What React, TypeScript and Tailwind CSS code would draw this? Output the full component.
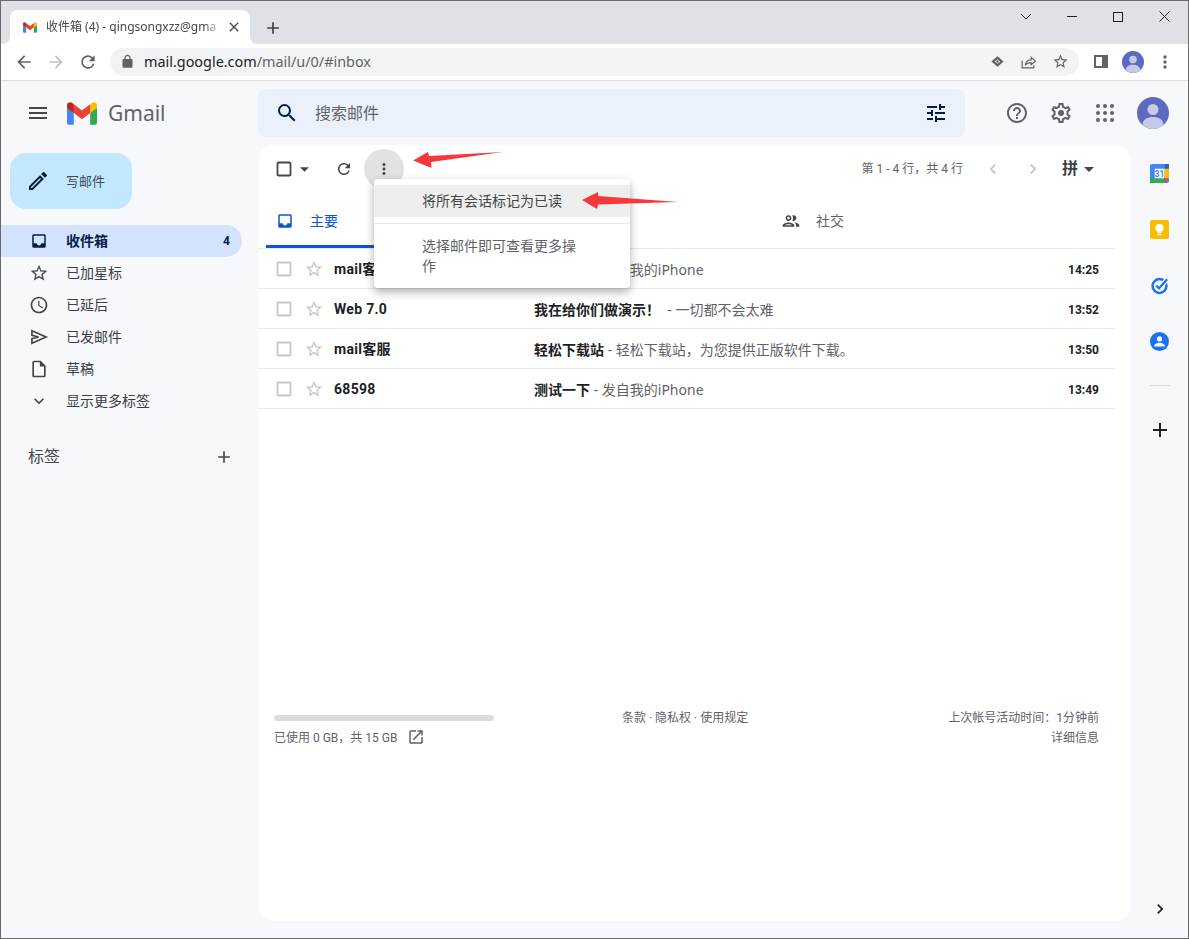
import React from "react";

const P = {
  menu: "M3 18h18v-2H3v2zm0-5h18v-2H3v2zm0-7v2h18V6H3z",
  search: "M15.5 14h-.79l-.28-.27A6.471 6.471 0 0 0 16 9.5 6.5 6.5 0 1 0 9.5 16c1.61 0 3.09-.59 4.23-1.57l.27.28v.79l5 4.99L20.49 19l-4.99-5zm-6 0C7.01 14 5 11.99 5 9.5S7.01 5 9.5 5 14 7.01 14 9.5 11.99 14 9.5 14z",
  tune: "M3 17v2h6v-2H3zM3 5v2h10V5H3zm10 16v-2h8v-2h-8v-2h-2v6h2zM7 9v2H3v2h4v2h2V9H7zm14 4v-2H11v2h10zm-6-4h2V7h4V5h-4V3h-2v6z",
  help: "M11 18h2v-2h-2v2zm1-16C6.48 2 2 6.48 2 12s4.48 10 10 10 10-4.48 10-10S17.52 2 12 2zm0 18c-4.41 0-8-3.59-8-8s3.59-8 8-8 8 3.59 8 8-3.59 8-8 8zm0-14c-2.21 0-4 1.79-4 4h2c0-1.1.9-2 2-2s2 .9 2 2c0 2-3 1.75-3 5h2c0-2.25 3-2.5 3-5 0-2.21-1.79-4-4-4z",
  gear: "M19.43 12.98c.04-.32.07-.64.07-.98 0-.34-.03-.66-.07-.98l2.11-1.65c.19-.15.24-.42.12-.64l-2-3.46a.5.5 0 0 0-.61-.22l-2.49 1c-.52-.4-1.08-.73-1.69-.98l-.38-2.65A.488.488 0 0 0 14 2h-4c-.25 0-.46.18-.49.42l-.38 2.65c-.61.25-1.17.59-1.69.98l-2.49-1a.566.566 0 0 0-.18-.03c-.17 0-.34.09-.43.25l-2 3.46c-.13.22-.07.49.12.64l2.11 1.65c-.04.32-.07.65-.07.98 0 .33.03.66.07.98l-2.11 1.65c-.19.15-.24.42-.12.64l2 3.46a.5.5 0 0 0 .61.22l2.49-1c.52.4 1.08.73 1.69.98l.38 2.65c.03.24.24.42.49.42h4c.25 0 .46-.18.49-.42l.38-2.65c.61-.25 1.17-.59 1.69-.98l2.49 1c.06.02.12.03.18.03.17 0 .34-.09.43-.25l2-3.46c.12-.22.07-.49-.12-.64l-2.11-1.65zm-1.98-1.71c.04.31.05.52.05.73 0 .21-.02.43-.05.73l-.14 1.13.89.7 1.08.84-.7 1.21-1.27-.51-1.04-.42-.9.68c-.43.32-.84.56-1.25.73l-1.06.43-.16 1.13-.2 1.35h-1.4l-.19-1.35-.16-1.13-1.06-.43c-.43-.18-.83-.41-1.23-.71l-.91-.7-1.06.43-1.27.51-.7-1.21 1.08-.84.89-.7-.14-1.13c-.03-.31-.05-.54-.05-.74s.02-.43.05-.73l.14-1.13-.89-.7-1.08-.84.7-1.21 1.27.51 1.04.42.9-.68c.43-.32.84-.56 1.25-.73l1.06-.43.16-1.13.2-1.35h1.39l.19 1.35.16 1.13 1.06.43c.43.18.83.41 1.23.71l.91.7 1.06-.43 1.27-.51.7 1.21-1.07.85-.89.7.14 1.13zM12 9a3 3 0 1 0 0 6 3 3 0 0 0 0-6z",
  pencil: "M3 17.25V21h3.75L17.81 9.94l-3.75-3.75L3 17.25zM5.92 19H5v-.92l9.06-9.06.92.92L5.92 19zM20.71 7.04a1 1 0 0 0 0-1.41l-2.34-2.34a1 1 0 0 0-1.41 0l-1.83 1.83 3.75 3.75 1.83-1.83z",
  inbox: "M19 3H5c-1.1 0-2 .9-2 2v14c0 1.1.9 2 2 2h14c1.1 0 2-.9 2-2V5c0-1.1-.9-2-2-2zm0 12h-4c0 1.66-1.34 3-3 3s-3-1.34-3-3H5V5h14v10z",
  star: "M22 9.24l-7.19-.62L12 2 9.19 8.63 2 9.24l5.46 4.73L5.82 21 12 17.27 18.18 21l-1.63-7.03L22 9.24zM12 15.4l-3.76 2.27 1-4.28-3.32-2.88 4.38-.38L12 6.1l1.71 4.04 4.38.38-3.32 2.88 1 4.28L12 15.4z",
  clock: "M11.99 2C6.47 2 2 6.48 2 12s4.47 10 9.99 10C17.52 22 22 17.52 22 12S17.52 2 11.99 2zM12 20c-4.42 0-8-3.58-8-8s3.58-8 8-8 8 3.58 8 8-3.58 8-8 8zm.5-13H11v6l5.25 3.15.75-1.23-4.5-2.67z",
  draft: "M14 2H6c-1.1 0-1.99.9-1.99 2L4 20c0 1.1.89 2 1.99 2H18c1.1 0 2-.9 2-2V8l-6-6zM6 20V4h7v5h5v11H6z",
  chevDown: "M16.59 8.59L12 13.17 7.41 8.59 6 10l6 6 6-6z",
  chevLeft: "M15.41 7.41L14 6l-6 6 6 6 1.41-1.41L10.83 12z",
  chevRight: "M8.59 16.59L10 18l6-6-6-6-1.41 1.41L13.17 12z",
  plus: "M19 13h-6v6h-2v-6H5v-2h6V5h2v6h6v2z",
  refresh: "M17.65 6.35A7.958 7.958 0 0 0 12 4c-4.42 0-7.99 3.58-7.99 8s3.57 8 7.99 8c3.73 0 6.84-2.55 7.73-6h-2.08A5.99 5.99 0 0 1 12 18c-3.31 0-6-2.69-6-6s2.69-6 6-6c1.66 0 3.14.69 4.22 1.78L13 11h7V4l-2.35 2.35z",
  people: "M9 13.75c-2.34 0-7 1.17-7 3.5V19h14v-1.75c0-2.33-4.66-3.5-7-3.5zM4.34 17c.84-.58 2.87-1.25 4.66-1.25s3.82.67 4.66 1.25H4.34zM9 12c1.93 0 3.5-1.57 3.5-3.5S10.93 5 9 5 5.5 6.57 5.5 8.5 7.07 12 9 12zm0-5c.83 0 1.5.67 1.5 1.5S9.83 10 9 10s-1.5-.67-1.5-1.5S8.17 7 9 7zm7.04 6.81c1.16.84 1.96 1.96 1.96 3.44V19h4v-1.75c0-2.02-3.5-3.17-5.96-3.44zM15 12c1.93 0 3.5-1.57 3.5-3.5S16.93 5 15 5c-.54 0-1.04.13-1.5.35.63.89 1 1.98 1 3.15s-.37 2.26-1 3.15c.46.22.96.35 1.5.35z",
  open: "M19 19H5V5h7V3H5a2 2 0 0 0-2 2v14a2 2 0 0 0 2 2h14c1.1 0 2-.9 2-2v-7h-2v7zM14 3v2h3.59l-9.83 9.83 1.41 1.41L19 6.41V10h2V3h-7z",
  lock: "M18 8h-1V6c0-2.76-2.24-5-5-5S7 3.24 7 6v2H6c-1.1 0-2 .9-2 2v10c0 1.1.9 2 2 2h12c1.1 0 2-.9 2-2V10c0-1.1-.9-2-2-2zM9 6c0-1.66 1.34-3 3-3s3 1.34 3 3v2H9V6z",
  back: "M20 11H7.83l5.59-5.59L12 4l-8 8 8 8 1.41-1.41L7.83 13H20v-2z",
  forward: "M12 4l-1.41 1.41L16.17 11H4v2h12.17l-5.58 5.59L12 20l8-8z",
  dots: "M12 8c1.1 0 2-.9 2-2s-.9-2-2-2-2 .9-2 2 .9 2 2 2zm0 2c-1.1 0-2 .9-2 2s.9 2 2 2 2-.9 2-2-.9-2-2-2zm0 6c-1.1 0-2 .9-2 2s.9 2 2 2 2-.9 2-2-.9-2-2-2z",
  close: "M19 6.41L17.59 5 12 10.59 6.41 5 5 6.41 10.59 12 5 17.59 6.41 19 12 13.41 17.59 19 19 17.59 13.41 12z",
};

function I({ d, className }: { d: string; className: string }) {
  return (
    <svg viewBox="0 0 24 24" className={"shrink-0 fill-current " + className}>
      <path d={d} />
    </svg>
  );
}

function SendIcon({ className }: { className: string }) {
  return (
    <svg viewBox="0 0 24 24" className={"shrink-0 fill-none stroke-current " + className} strokeWidth="2">
      <path d="M3.500 4.500L20.500 12 3.500 19.500V14l8-2-8-2z" />
    </svg>
  );
}

function GmailLogo({ className }: { className: string }) {
  return (
    <svg viewBox="0 0 256 193" className={"shrink-0 " + className}>
      <path fill="#4285F4" d="M58.182 192.05V93.14L27.507 65.077 0 49.504v125.091c0 9.658 7.825 17.455 17.455 17.455h40.727Z" />
      <path fill="#34A853" d="M197.818 192.05h40.727c9.659 0 17.455-7.826 17.455-17.455V49.505l-31.156 17.837-27.026 25.798v98.91Z" />
      <path fill="#EA4335" d="m58.182 93.14-4.174-38.647 4.174-36.989L128 69.868l69.818-52.364 4.669 34.992-4.669 40.644L128 145.504z" />
      <path fill="#FBBC04" d="M197.818 17.504V93.14L256 49.504V26.231c0-21.585-24.64-33.89-41.89-20.945l-16.292 12.218Z" />
      <path fill="#C5221F" d="m0 49.504 26.759 20.07L58.182 93.14V17.504L41.89 5.286C24.61-7.66 0 4.646 0 26.23v23.273Z" />
    </svg>
  );
}

function Avatar({ className }: { className: string }) {
  return (
    <svg viewBox="0 0 32 32" className={"shrink-0 " + className}>
      <circle cx="16" cy="16" r="16" fill="#5c6bc0" />
      <circle cx="16" cy="12.5" r="5.5" fill="#c5cae9" />
      <path d="M5.5 28c0-5.5 5-8 10.5-8s10.500 2.500 10.500 8a16 16 0 0 1-21 0z" fill="#c5cae9" />
    </svg>
  );
}

const nav = [
  { d: P.star, t: "已加星标" },
  { d: P.clock, t: "已延后" },
  { d: "", t: "已发邮件" },
  { d: P.draft, t: "草稿" },
  { d: P.chevDown, t: "显示更多标签" },
];

const rows = [
  { s: "mail客服", b: "测试一下", n: " - 发自我的iPhone", t: "14:25" },
  { s: "Web 7.0", b: "我在给你们做演示！", n: " \u00a0- 一切都不会太难", t: "13:52" },
  { s: "mail客服", b: "轻松下载站", n: " - 轻松下载站，为您提供正版软件下载。", t: "13:50" },
  { s: "68598", b: "测试一下", n: " - 发自我的iPhone", t: "13:49" },
];

export default function App() {
  return (
    <div className="relative flex h-[939px] w-[1189px] flex-col overflow-hidden border border-[#6b6b6b] bg-white font-['Roboto','Noto_Sans_CJK_SC',sans-serif] text-[#202124]">
      {/* tab strip */}
      <div className="flex h-[43px] shrink-0 items-end bg-[#dee1e6] pl-[9px]">
        <div className="relative flex h-[34px] w-[240px] shrink-0 items-center rounded-t-[8px] bg-white pl-[13px]">
          <svg viewBox="0 0 8 8" className="absolute -left-[8px] bottom-0 h-[8px] w-[8px] fill-white">
            <path d="M8 0v8H0c5 0 8-3 8-8z" />
          </svg>
          <svg viewBox="0 0 8 8" className="absolute -right-[8px] bottom-0 h-[8px] w-[8px] fill-white">
            <path d="M0 0v8H8C3 8 0 5 0 0z" />
          </svg>
          <GmailLogo className="h-[11px] w-[14px]" />
          <span className="ml-[9px] w-[176px] overflow-hidden whitespace-nowrap font-['Noto_Sans','Noto_Sans_CJK_SC',sans-serif] text-[12px] text-[#45474a] [mask-image:linear-gradient(to_right,black_90%,transparent)]">
            收件箱 (4) - qingsongxzz@gma
          </span>
          <I d={P.close} className="absolute left-[216px] h-[16px] w-[16px] text-[#45474a]" />
        </div>
        <I d={P.plus} className="mb-[6px] ml-[13px] h-[20px] w-[20px] text-[#3c4043]" />
        <div className="mb-[22px] ml-auto mr-[18px] flex items-center">
          <svg viewBox="0 0 12 8" className="mr-[35px] h-[8px] w-[12px] fill-none stroke-[#202124]"><path d="M1 1l5 5 5-5" /></svg>
          <div className="mr-[36px] h-px w-[10px] bg-[#202124]" />
          <div className="mr-[36px] h-[10px] w-[10px] border border-[#202124]" />
          <svg viewBox="0 0 11 11" className="h-[11px] w-[11px] fill-none stroke-[#202124]"><path d="M.5.500l10 10M10.500.500l-10 10" /></svg>
        </div>
      </div>

      {/* browser toolbar */}
      <div className="flex h-[37px] shrink-0 items-center border-b border-[#dadce0] bg-white pb-px pl-[13px]">
        <I d={P.back} className="h-[20px] w-[20px] text-[#5f6368]" />
        <I d={P.forward} className="ml-[12px] h-[20px] w-[20px] text-[#bdc1c6]" />
        <I d={P.refresh} className="ml-[12px] h-[20px] w-[20px] text-[#5f6368]" />
        <div className="ml-[12px] flex h-[28px] w-[969px] shrink-0 items-center rounded-full bg-[#f1f3f4] pl-[10px]">
          <I d={P.lock} className="h-[15px] w-[15px] text-[#5f6368]" />
          <span className="ml-[9px] whitespace-nowrap font-['Noto_Sans',sans-serif] text-[14.4px] text-[#202124]">
            mail.google.com<span className="text-[#5f6368]">/mail/u/0/#inbox</span>
          </span>
          <div className="ml-auto flex items-center pr-[10px] text-[#5f6368]">
            <svg viewBox="0 0 16 16" className="mr-[15px] h-[15px] w-[15px]">
              <path d="M8 2.500L14.500 8 8 13.500 1.500 8z" fill="#5f6368" />
              <path d="M8 5.500L11 8 8 10.500 5 8z" fill="#f1f3f4" />
              <circle cx="8" cy="8" r="1.300" fill="#5f6368" />
            </svg>
            <svg viewBox="0 0 16 16" className="mr-[15px] h-[17px] w-[17px] fill-none stroke-[#5f6368]" strokeWidth="1.100">
              <path d="M2 7v7h11v-2.500" />
              <path d="M5 11.500c.5-3.500 3-5 5.500-5V4l4 3.700-4 3.300V9c-2.200 0-4.200.7-5.500 2.500z" />
            </svg>
            <I d={P.star} className="h-[17px] w-[17px]" />
          </div>
        </div>
        <div className="ml-[15px] h-[13px] w-[14px] shrink-0 border-2 border-r-[6px] border-[#5f6368] bg-white" />
        <Avatar className="ml-[14px] h-[22px] w-[22px]" />
        <I d={P.dots} className="ml-[11px] h-[20px] w-[20px] text-[#5f6368]" />
      </div>

      {/* gmail body */}
      <div className="flex min-h-0 flex-1 bg-[#f6f8fc]">
        {/* sidebar */}
        <div className="flex w-[257px] shrink-0 flex-col">
          <div className="flex h-[64px] items-center pl-[25px]">
            <I d={P.menu} className="h-[24px] w-[24px] text-[#444746]" />
            <GmailLogo className="ml-[17px] h-[23px] w-[30px]" />
            <span className="ml-[11px] pt-[2px] font-['Noto_Sans',sans-serif] text-[21px] text-[#5f6368]">Gmail</span>
          </div>
          <div className="ml-[9px] mt-[8px] flex h-[56px] w-[122px] items-center rounded-[16px] bg-[#c2e7ff] pl-[16px]">
            <I d={P.pencil} className="h-[24px] w-[24px] text-[#001d35]" />
            <span className="ml-[16px] pt-[2px] text-[13px] text-[#3c4a57]">写邮件</span>
          </div>
          <div className="mt-[16px] flex w-[241px] flex-col">
            <div className="flex h-[32px] items-center rounded-r-full bg-[#d3e3fd] pl-[29px] pr-[12px] text-[#041e49]">
              <I d={P.inbox} className="h-[18px] w-[18px]" />
              <span className="ml-[18px] text-[14px] font-bold">收件箱</span>
              <span className="ml-auto text-[12px] font-bold">4</span>
            </div>
            {nav.map((n) => (
              <div key={n.t} className="flex h-[32px] items-center pl-[28px] text-[#3c4043]">
                {n.d ? (
                  <I d={n.d} className="h-[20px] w-[20px] text-[#444746]" />
                ) : (
                  <SendIcon className="h-[20px] w-[20px] text-[#444746]" />
                )}
                <span className="ml-[17px] text-[14px]">{n.t}</span>
              </div>
            ))}
          </div>
          <div className="ml-[27px] mt-[28px] flex w-[206px] items-center justify-between text-[#444746]">
            <span className="text-[16px]">标签</span>
            <I d={P.plus} className="h-[20px] w-[20px]" />
          </div>
        </div>

        {/* center */}
        <div className="flex w-[873px] shrink-0 flex-col pb-[17px]">
          <div className="flex h-[64px] shrink-0 items-center">
            <div className="flex h-[48px] w-[707px] shrink-0 items-center rounded-[8px] bg-[#eaf1fb] pl-[17px] pr-[17px]">
              <I d={P.search} className="h-[24px] w-[24px] text-[#041e49]" />
              <span className="ml-[16px] pt-[2px] text-[16px] text-[#5f6368]">搜索邮件</span>
              <I d={P.tune} className="ml-auto h-[24px] w-[24px] text-[#041e49]" />
            </div>
            <div className="ml-[40px] flex items-center text-[#5f6368]">
              <I d={P.help} className="h-[24px] w-[24px]" />
              <I d={P.gear} className="ml-[20px] h-[24px] w-[24px]" />
              <svg viewBox="0 0 24 24" className="ml-[20px] h-[24px] w-[24px] fill-[#5f6368]">
                {[5, 12, 19].map((y) =>
                  [5, 12, 19].map((x) => <circle key={x + "-" + y} cx={x} cy={y} r="2" />)
                )}
              </svg>
              <Avatar className="ml-[20px] h-[32px] w-[32px]" />
            </div>
          </div>

          <div className="flex min-h-0 flex-1 flex-col rounded-[16px] bg-white pr-[16px]">
            {/* toolbar */}
            <div className="flex h-[48px] shrink-0 items-center pl-[17px] text-[#444746]">
              <svg viewBox="0 0 18 18" className="h-[18px] w-[18px] fill-none stroke-[#444746]" strokeWidth="1.800">
                <rect x="2.500" y="2.500" width="13" height="13" rx="1" />
              </svg>
              <svg viewBox="0 0 10 5" className="ml-[7px] h-[5px] w-[9px] fill-[#444746]"><path d="M0 0h10L5 5z" /></svg>
              <I d={P.refresh} className="ml-[26px] h-[18px] w-[18px]" />
              <div className="ml-[11px] flex h-[40px] w-[40px] items-center justify-center rounded-full bg-[#e2e2e2]">
                <I d={P.dots} className="h-[18px] w-[18px]" />
              </div>
              <span className="ml-auto text-[12px] text-[#5f6368]">第 1 - 4 行，共 4 行</span>
              <I d={P.chevLeft} className="ml-[20px] h-[20px] w-[20px] text-[#bfc2c6]" />
              <I d={P.chevRight} className="ml-[20px] h-[20px] w-[20px] text-[#bfc2c6]" />
              <span className="ml-[19px] text-[16px] font-bold text-[#3c4043]">拼</span>
              <svg viewBox="0 0 10 5" className="ml-[6px] mr-[21px] h-[5px] w-[10px] fill-[#444746]"><path d="M0 0h10L5 5z" /></svg>
            </div>
            {/* tabs */}
            <div className="flex h-[56px] shrink-0 items-stretch border-b border-[#e8eaed] pl-[8px]">
              <div className="flex w-[256px] items-center border-b-[3px] border-[#0b57d0] pl-[10px] pt-[4px] text-[#0b57d0]">
                <I d={P.inbox} className="h-[18px] w-[18px]" />
                <span className="ml-[16px] text-[14px]">主要</span>
              </div>
              <div className="ml-[249px] flex items-center pl-[10px] pt-[1px] text-[#444746]">
                <I d={P.people} className="h-[20px] w-[20px]" />
                <span className="ml-[15px] text-[14px] text-[#5f6368]">社交</span>
              </div>
            </div>
            {/* rows */}
            {rows.map((r, i) => (
              <div key={i} className="flex h-[40px] shrink-0 items-center border-b border-[#e8eaed] pl-[17px] pr-[16px]">
                <svg viewBox="0 0 18 18" className="h-[18px] w-[18px] shrink-0 fill-none stroke-[#c4c7c5]" strokeWidth="1.800">
                  <rect x="2.500" y="2.500" width="13" height="13" rx="1" />
                </svg>
                <I d={P.star} className="ml-[11px] h-[20px] w-[20px] text-[#c4c7c5]" />
                <span className="ml-[10px] w-[200px] shrink-0 pt-[2px] text-[14px] font-bold tracking-[0.3px] text-[#202124]">{r.s}</span>
                <span className="whitespace-pre pt-[2px] text-[14px]">
                  <span className="font-bold text-[#202124]">{r.b}</span>
                  <span className="font-['Noto_Sans','Noto_Sans_CJK_SC',sans-serif] text-[#5f6368]">{r.n}</span>
                </span>
                <span className="ml-auto pt-[2px] text-[12px] font-bold text-[#202124]">{r.t}</span>
              </div>
            ))}
            <div className="flex-1" />
            {/* footer */}
            <div className="mb-[173px] flex shrink-0 justify-between pl-[16px] pr-[16px] text-[12px] leading-[20px] text-[#5f6368]">
              <div className="w-[220px]">
                <div className="mt-[7px] h-[6px] w-[220px] rounded-full bg-[#dadce0]" />
                <div className="mt-[7px] flex items-center">
                  <span>已使用 0 GB，共 15 GB</span>
                  <I d={P.open} className="ml-[10px] h-[18px] w-[18px] -translate-y-[1px]" />
                </div>
              </div>
              <div className="-ml-[72px]">条款 · 隐私权 · 使用规定</div>
              <div className="text-right">
                <div>上次帐号活动时间：1分钟前</div>
                <div>详细信息</div>
              </div>
            </div>
          </div>
        </div>

        {/* right rail */}
        <div className="flex w-[57px] shrink-0 flex-col items-center pb-[19px] pt-[83px]">
          <svg viewBox="0 0 20 20" className="h-[19px] w-[19px]">
            <rect x="0" y="0" width="20" height="20" rx="2" fill="#4285f4" />
            <rect x="15" y="0" width="5" height="15" fill="#fbbc04" />
            <rect x="15" y="0" width="5" height="5" rx="1" fill="#1967d2" />
            <rect x="0" y="15" width="15" height="5" fill="#34a853" />
            <path d="M15 15h5l-5 5z" fill="#ea4335" />
            <rect x="5" y="5" width="10" height="10" fill="#fff" />
            <text x="10" y="13.500" textAnchor="middle" fontSize="9" fontWeight="700" fill="#4285f4">31</text>
          </svg>
          <svg viewBox="0 0 20 20" className="mt-[37px] h-[19px] w-[19px]">
            <rect width="20" height="20" rx="2" fill="#fbbc04" />
            <circle cx="10" cy="8.500" r="4.300" fill="#fff" />
            <rect x="8" y="12" width="4" height="2" fill="#fff" />
            <rect x="8" y="14.800" width="4" height="1.300" fill="#fff" />
          </svg>
          <svg viewBox="0 0 20 20" className="mt-[37px] h-[19px] w-[19px] fill-none">
            <circle cx="10" cy="10.500" r="7.300" stroke="#1a73e8" strokeWidth="2.600" />
            <path d="M6.500 10l3 3 8.500-9.500" stroke="#fff" strokeWidth="5" />
            <path d="M6.500 10l3 3 8.500-9.500" stroke="#1a73e8" strokeWidth="2.400" />
          </svg>
          <svg viewBox="0 0 20 20" className="mt-[37px] h-[19px] w-[19px]">
            <circle cx="10" cy="10" r="10" fill="#1a73e8" />
            <circle cx="10" cy="7.300" r="2.800" fill="#fff" />
            <path d="M4.500 14.500c0-2.200 3.500-3.200 5.500-3.200s5.500 1 5.500 3.200v.8h-11z" fill="#fff" />
          </svg>
          <div className="mt-[34px] h-px w-[20px] bg-[#dadce0]" />
          <I d={P.plus} className="mt-[32px] h-[24px] w-[24px] text-[#1f1f1f]" />
          <I d={P.chevRight} className="mt-auto h-[20px] w-[20px] text-[#1f1f1f]" />
        </div>
      </div>

      {/* dropdown menu */}
      <div className="absolute left-[373px] top-[178px] h-[109px] w-[256px] rounded-[4px] bg-white py-[6px] text-[14px] text-[#444746] shadow-[0_4px_10px_rgba(0,0,0,0.32)]">
        <div className="flex h-[32px] items-center bg-[#eeeeee] pl-[48px]">将所有会话标记为已读</div>
        <div className="mt-[6px] h-px bg-[#e8eaed]" />
        <div className="mt-[12px] pl-[48px] pr-[48px] leading-[20px] text-[#5f6368]">选择邮件即可查看更多操作</div>
      </div>

      {/* annotation arrows */}
      <svg viewBox="0 0 90 18" className="absolute left-[412px] top-[150px] h-[18px] w-[90px] fill-[#f5383b]">
        <path d="M0 9.500L15 1l1 4 74-4-72 10 .5 6z" />
      </svg>
      <svg viewBox="0 0 96 18" className="absolute left-[581px] top-[190px] h-[18px] w-[96px] fill-[#f5383b]">
        <path d="M0 9L16 1v4l80 6-80 2.500-1 4.500z" />
      </svg>
    </div>
  );
}
